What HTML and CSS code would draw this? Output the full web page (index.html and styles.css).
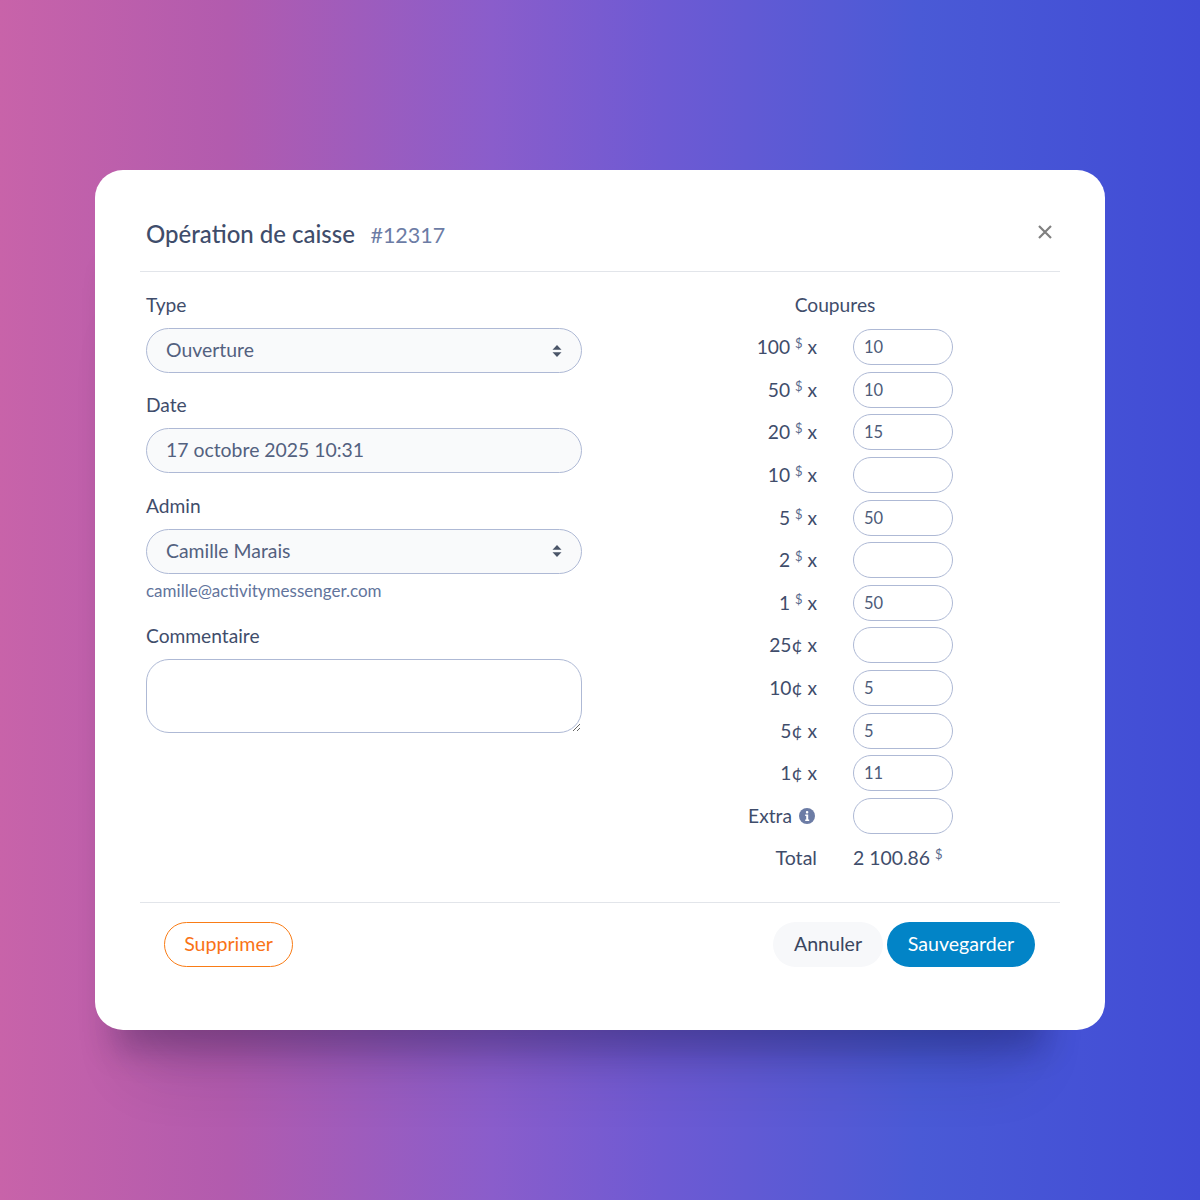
FILE: index.html
```html
<!DOCTYPE html>
<html lang="fr">
<head>
<meta charset="utf-8">
<title>Opération de caisse</title>
<link rel="stylesheet" href="styles.css">
</head>
<body>
<div class="modal">
  <header class="head">
    <h1 class="title">Opération de caisse</h1>
    <span class="ref">#12317</span>
    <svg class="close" viewBox="0 0 14 14" width="14" height="14"><path d="M1 1l12 12M13 1L1 13"/></svg>
  </header>
  <main class="body">
    <section class="left">
      <div class="label">Type</div>
      <div class="field select"><span>Ouverture</span><svg class="updown" viewBox="0 0 10 14" width="10" height="14"><path d="M5 1l4.5 4.8h-9zM5 13L.5 8.2h9z"/></svg></div>
      <div class="label">Date</div>
      <div class="field"><span>17 octobre 2025 10:31</span></div>
      <div class="label">Admin</div>
      <div class="field select"><span>Camille Marais</span><svg class="updown" viewBox="0 0 10 14" width="10" height="14"><path d="M5 1l4.5 4.8h-9zM5 13L.5 8.2h9z"/></svg></div>
      <div class="hint">camille@activitymessenger.com</div>
      <div class="label comment-label">Commentaire</div>
      <textarea class="comment"></textarea>
    </section>
    <section class="right">
      <div class="coupures">Coupures</div>
      <div class="rows">
        <div class="name">100 <sup>$</sup> x</div><input class="qty" value="10">
        <div class="name">50 <sup>$</sup> x</div><input class="qty" value="10">
        <div class="name">20 <sup>$</sup> x</div><input class="qty" value="15">
        <div class="name">10 <sup>$</sup> x</div><input class="qty" value="">
        <div class="name">5 <sup>$</sup> x</div><input class="qty" value="50">
        <div class="name">2 <sup>$</sup> x</div><input class="qty" value="">
        <div class="name">1 <sup>$</sup> x</div><input class="qty" value="50">
        <div class="name">25¢ x</div><input class="qty" value="">
        <div class="name">10¢ x</div><input class="qty" value="5">
        <div class="name">5¢ x</div><input class="qty" value="5">
        <div class="name">1¢ x</div><input class="qty" value="11">
        <div class="name extra">Extra <svg class="info" viewBox="0 0 16 16" width="16" height="16"><circle cx="8" cy="8" r="8"/><rect class="i" x="6.9" y="3" width="2.4" height="2.4" rx="1"/><path class="i" d="M6.2 6.6h3v5h1v1.3H6.2v-1.3h1v-3.7h-1z"/></svg></div><input class="qty" value="">
        <div class="name total-name">Total</div><div class="total">2 100.86 <sup>$</sup></div>
      </div>
    </section>
  </main>
  <footer class="foot">
    <button class="btn danger">Supprimer</button>
    <div class="actions">
      <button class="btn ghost">Annuler</button>
      <button class="btn primary">Sauvegarder</button>
    </div>
  </footer>
</div>
</body>
</html>
```
FILE: styles.css
```css
* { box-sizing: border-box; }
html, body { margin: 0; height: 100%; }
body {
  width: 1200px;
  height: 1200px;
  display: flex;
  align-items: center;
  justify-content: center;
  background: linear-gradient(90deg, #c863a9 0%, #b25bae 19%, #8a5dcb 41%, #6e5ad3 55%, #4a5ad6 76.5%, #414cd6 100%);
  font-family: "Lato", "Noto Sans", sans-serif;
  font-size: 19.2px;
  color: #3f4d6b;
  overflow: hidden;
}
.modal {
  width: 1010px;
  height: 860px;
  padding: 0 45px;
  background: #fff;
  border-radius: 28px;
  box-shadow: -20px 60px 30px -40px rgba(10, 10, 40, .24), -20px 100px 60px -60px rgba(10, 10, 40, .12);
}
.head {
  height: 102px;
  display: flex;
  align-items: baseline;
  padding: 49px 0 0 6px;
  border-bottom: 1px solid #e2e5ea;
  position: relative;
}
.title { margin: 0; font-size: 24px; font-weight: 500; line-height: 30px; color: #3f4d6b; }
.ref { margin-left: 15.5px; font-size: 21.5px; color: #6c7ca5; }
.close {
  position: absolute;
  right: 8.5px;
  top: 55px;
  fill: none;
  stroke: #808080;
  stroke-width: 2.2;
}
.body { display: flex; height: 630px; padding-left: 6px; }
.left { width: 436px; padding-top: 21px; }
.label { line-height: 24px; margin-bottom: 11px; }
.field {
  height: 45px;
  margin-bottom: 20.3px;
  padding: 0 19px 2px;
  display: flex;
  align-items: center;
  justify-content: space-between;
  background: #f9fafb;
  border: 1px solid #aeb9d5;
  border-radius: 23px;
  color: #53617f;
  font-size: 19.4px;
}
.updown { fill: #4a5568; margin-top: 2px; }
.select + .hint { margin-top: -14px; }
.hint { font-size: 17px; line-height: 22px; color: #62749c; }
.comment-label { margin-top: 22px; }
.comment {
  display: block;
  width: 436px;
  height: 74px;
  border: 1px solid #aeb9d5;
  border-radius: 23px;
  background: #fff;
  outline: none;
}
.right { margin-left: 148px; padding-top: 21px; }
.coupures { width: 210px; text-align: center; line-height: 24px; margin-bottom: 12px; }
.rows {
  display: grid;
  grid-template-columns: 88px 100px;
  column-gap: 35px;
  row-gap: 6.65px;
  align-items: center;
}
.name { text-align: right; line-height: 36px; white-space: nowrap; padding-right: 1px; }
.name sup, .total sup { font-size: 13px; line-height: 0; vertical-align: 6px; color: #5a6a8c; }
.extra { display: flex; align-items: center; justify-content: flex-end; gap: 7px; padding-right: 3px; }
.info { fill: #6c7ca5; }
.info .i { fill: #fff; }
.qty {
  width: 100px;
  height: 36px;
  padding: 0 10px;
  border: 1px solid #aeb9d5;
  border-radius: 18px;
  background: #fff;
  font: inherit;
  font-size: 16.5px;
  color: #4d5b79;
  outline: none;
}
.total { line-height: 34px; padding-bottom: 2px; white-space: nowrap; font-size: 19.4px; }
.total-name { line-height: 34px; padding-bottom: 2px; font-size: 19.6px; }
.foot {
  height: 128px;
  display: flex;
  justify-content: space-between;
  align-items: flex-start;
  padding: 19px 25px 0 24px;
  border-top: 1px solid #e2e5ea;
}
.actions { display: flex; gap: 4px; }
.btn {
  height: 45px;
  border-radius: 23px;
  border: 1px solid transparent;
  font: inherit;
  font-size: 19.6px;
  padding: 0 10px 2px;
}
.danger { width: 129px; background: #fff; border-color: #f97c16; color: #f97316; }
.ghost { width: 110px; background: #f7f8fa; color: #3a465f; }
.primary { width: 148px; background: #0284c7; color: #fff; }
```
